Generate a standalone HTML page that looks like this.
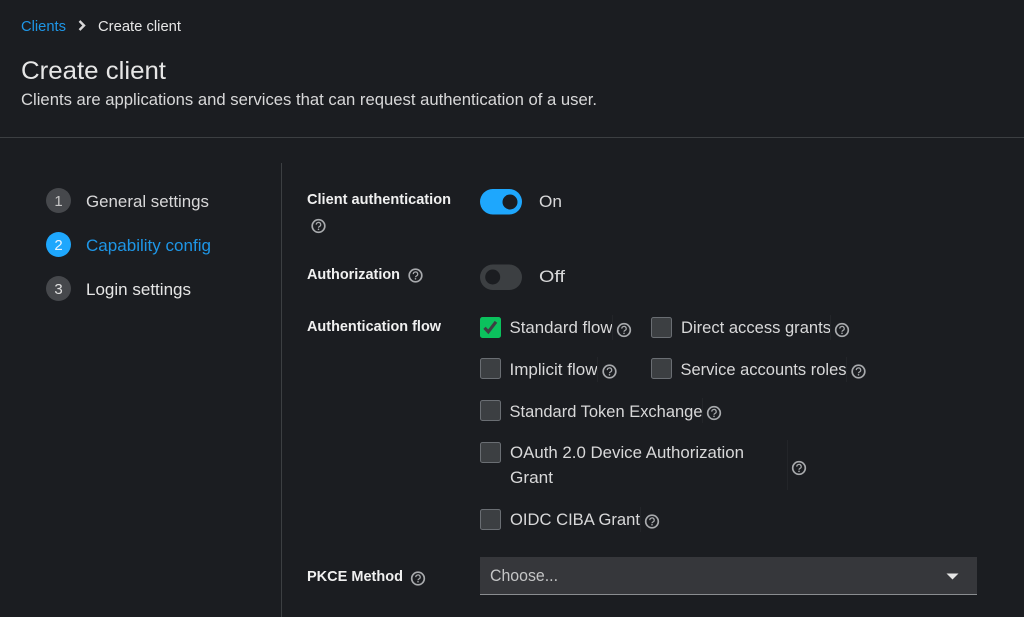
<!DOCTYPE html>
<html lang="en"><head><meta charset="utf-8"><title>Create client</title>
<style>
html,body{margin:0;padding:0;background:#1b1d21;width:1024px;height:617px;overflow:hidden}
svg{display:block}
text{font-family:"Liberation Sans",sans-serif;font-size:17px;fill:#d8d8d9}
.b{font-weight:700;font-size:15px;fill:#f0f0f0}
.h circle{fill:none;stroke:#a8aaad;stroke-width:1.7}
.h path{fill:none;stroke:#a8aaad;stroke-width:1.25}
.h circle.d{fill:#a8aaad;stroke:none}
.c{fill:#3c3f42;stroke:#6a6e73;stroke-width:1}
</style></head><body>
<svg width="1024" height="617" viewBox="0 0 1024 617" xmlns="http://www.w3.org/2000/svg">
<defs>
<g id="q" class="h"><circle r="6.3"/><path d="M-2.2-1.4A2.2 2.1 0 1 1 1 .4C.3.8 0 1.1 0 1.800"/><circle class="d" cy="3.300" r=".8"/></g>
</defs>
<rect width="1024" height="617" fill="#1b1d21"/>

<text x="21" y="31" style="font-size:15px;fill:#1e96e6" textLength="45" lengthAdjust="spacingAndGlyphs">Clients</text>
<path d="M79.500 21l4.500 4.500-4.500 4.500" fill="none" stroke="#d8d8d9" stroke-width="2.400"/>
<text x="98" y="31" style="font-size:15px;fill:#e6e6e6" textLength="83" lengthAdjust="spacingAndGlyphs">Create client</text>
<text x="21" y="79" style="font-size:25px;fill:#e6e6e6" textLength="145" lengthAdjust="spacingAndGlyphs">Create client</text>
<text x="21" y="105" textLength="576" lengthAdjust="spacingAndGlyphs">Clients are applications and services that can request authentication of a user.</text>
<rect x="0" y="137" width="1024" height="1" fill="#3c3f42"/>
<rect x="281" y="163" width="1" height="454" fill="#3c3f42"/>

<circle cx="58.500" cy="200.500" r="12.500" fill="#46484c"/>
<text x="58.500" y="206" text-anchor="middle" style="font-size:15px;fill:#c7c7c7">1</text>
<text x="86" y="207" textLength="123" lengthAdjust="spacingAndGlyphs">General settings</text>
<circle cx="58.500" cy="244.500" r="12.500" fill="#1ea7fd"/>
<text x="58.500" y="250" text-anchor="middle" style="font-size:15px;fill:#e8f4ff">2</text>
<text x="86" y="251" style="fill:#1e96e6" textLength="125" lengthAdjust="spacingAndGlyphs">Capability config</text>
<circle cx="58.500" cy="288.500" r="12.500" fill="#46484c"/>
<text x="58.500" y="294" text-anchor="middle" style="font-size:15px;fill:#e0e0e0">3</text>
<text x="86" y="295" style="fill:#e6e6e6" textLength="105" lengthAdjust="spacingAndGlyphs">Login settings</text>

<text class="b" x="307" y="204" textLength="144" lengthAdjust="spacingAndGlyphs">Client authentication</text>
<use href="#q" x="318.500" y="226"/>
<rect x="480" y="189" width="42" height="25.500" rx="12.750" fill="#1ea7fd"/>
<circle cx="510" cy="202" r="7.500" fill="#1b1d21"/>
<text x="539" y="207" textLength="23" lengthAdjust="spacingAndGlyphs">On</text>

<text class="b" x="307" y="279" textLength="93" lengthAdjust="spacingAndGlyphs">Authorization</text>
<use href="#q" x="415.500" y="275.500"/>
<rect x="480" y="264.500" width="42" height="25.500" rx="12.750" fill="#3c3f42"/>
<circle cx="492.700" cy="277" r="7.500" fill="#1b1d21"/>
<text x="539" y="282" textLength="26" lengthAdjust="spacingAndGlyphs">Off</text>

<text class="b" x="307" y="331" textLength="134" lengthAdjust="spacingAndGlyphs">Authentication flow</text>

<rect x="480.500" y="317.500" width="20" height="20" rx="2" fill="#0bc15d" stroke="#0bc15d"/>
<path d="M484.500 327.800l3.800 4 7.700-10" fill="none" stroke="#3c3f42" stroke-width="3.200"/>
<text x="509.500" y="333" textLength="103" lengthAdjust="spacingAndGlyphs">Standard flow</text>
<rect x="612" y="315" width="1" height="25" fill="#232529"/>
<use href="#q" x="624" y="330"/>

<rect class="c" x="651.500" y="317.500" width="20" height="20" rx="2"/>
<text x="681" y="333" textLength="150" lengthAdjust="spacingAndGlyphs">Direct access grants</text>
<rect x="830" y="315" width="1" height="25" fill="#232529"/>
<use href="#q" x="842" y="330"/>

<rect class="c" x="480.500" y="358.500" width="20" height="20" rx="2"/>
<text x="509.500" y="375" textLength="88" lengthAdjust="spacingAndGlyphs">Implicit flow</text>
<rect x="597" y="357" width="1" height="25" fill="#232529"/>
<use href="#q" x="609.500" y="371.500"/>

<rect class="c" x="651.500" y="358.500" width="20" height="20" rx="2"/>
<text x="680.500" y="375" textLength="166" lengthAdjust="spacingAndGlyphs">Service accounts roles</text>
<rect x="846" y="357" width="1" height="25" fill="#232529"/>
<use href="#q" x="858.500" y="371.500"/>

<rect class="c" x="480.500" y="400.500" width="20" height="20" rx="2"/>
<text x="509.500" y="417" textLength="193" lengthAdjust="spacingAndGlyphs">Standard Token Exchange</text>
<rect x="702" y="398" width="1" height="25" fill="#232529"/>
<use href="#q" x="714" y="413"/>

<rect class="c" x="480.500" y="442.500" width="20" height="20" rx="2"/>
<text x="510" y="458" textLength="234" lengthAdjust="spacingAndGlyphs">OAuth 2.0 Device Authorization</text>
<text x="510" y="483" textLength="43" lengthAdjust="spacingAndGlyphs">Grant</text>
<rect x="787" y="440" width="1" height="50" fill="#232529"/>
<use href="#q" x="799" y="468"/>

<rect class="c" x="480.500" y="509.500" width="20" height="20" rx="2"/>
<text x="510" y="525" textLength="130" lengthAdjust="spacingAndGlyphs">OIDC CIBA Grant</text>
<rect x="640" y="507" width="1" height="25" fill="#232529"/>
<use href="#q" x="652" y="521.500"/>

<text class="b" x="307" y="581" textLength="96" lengthAdjust="spacingAndGlyphs">PKCE Method</text>
<use href="#q" x="418" y="578.500"/>
<rect x="480" y="557" width="497" height="38" fill="#36373b"/>
<rect x="480" y="594" width="497" height="1" fill="#8a8d90"/>
<text x="490" y="581" style="fill:#c4c5c6" textLength="68" lengthAdjust="spacingAndGlyphs">Choose...</text>
<path d="M946.500 573.500h12l-6 6z" fill="#e6e6e6"/>
</svg>
</body></html>
